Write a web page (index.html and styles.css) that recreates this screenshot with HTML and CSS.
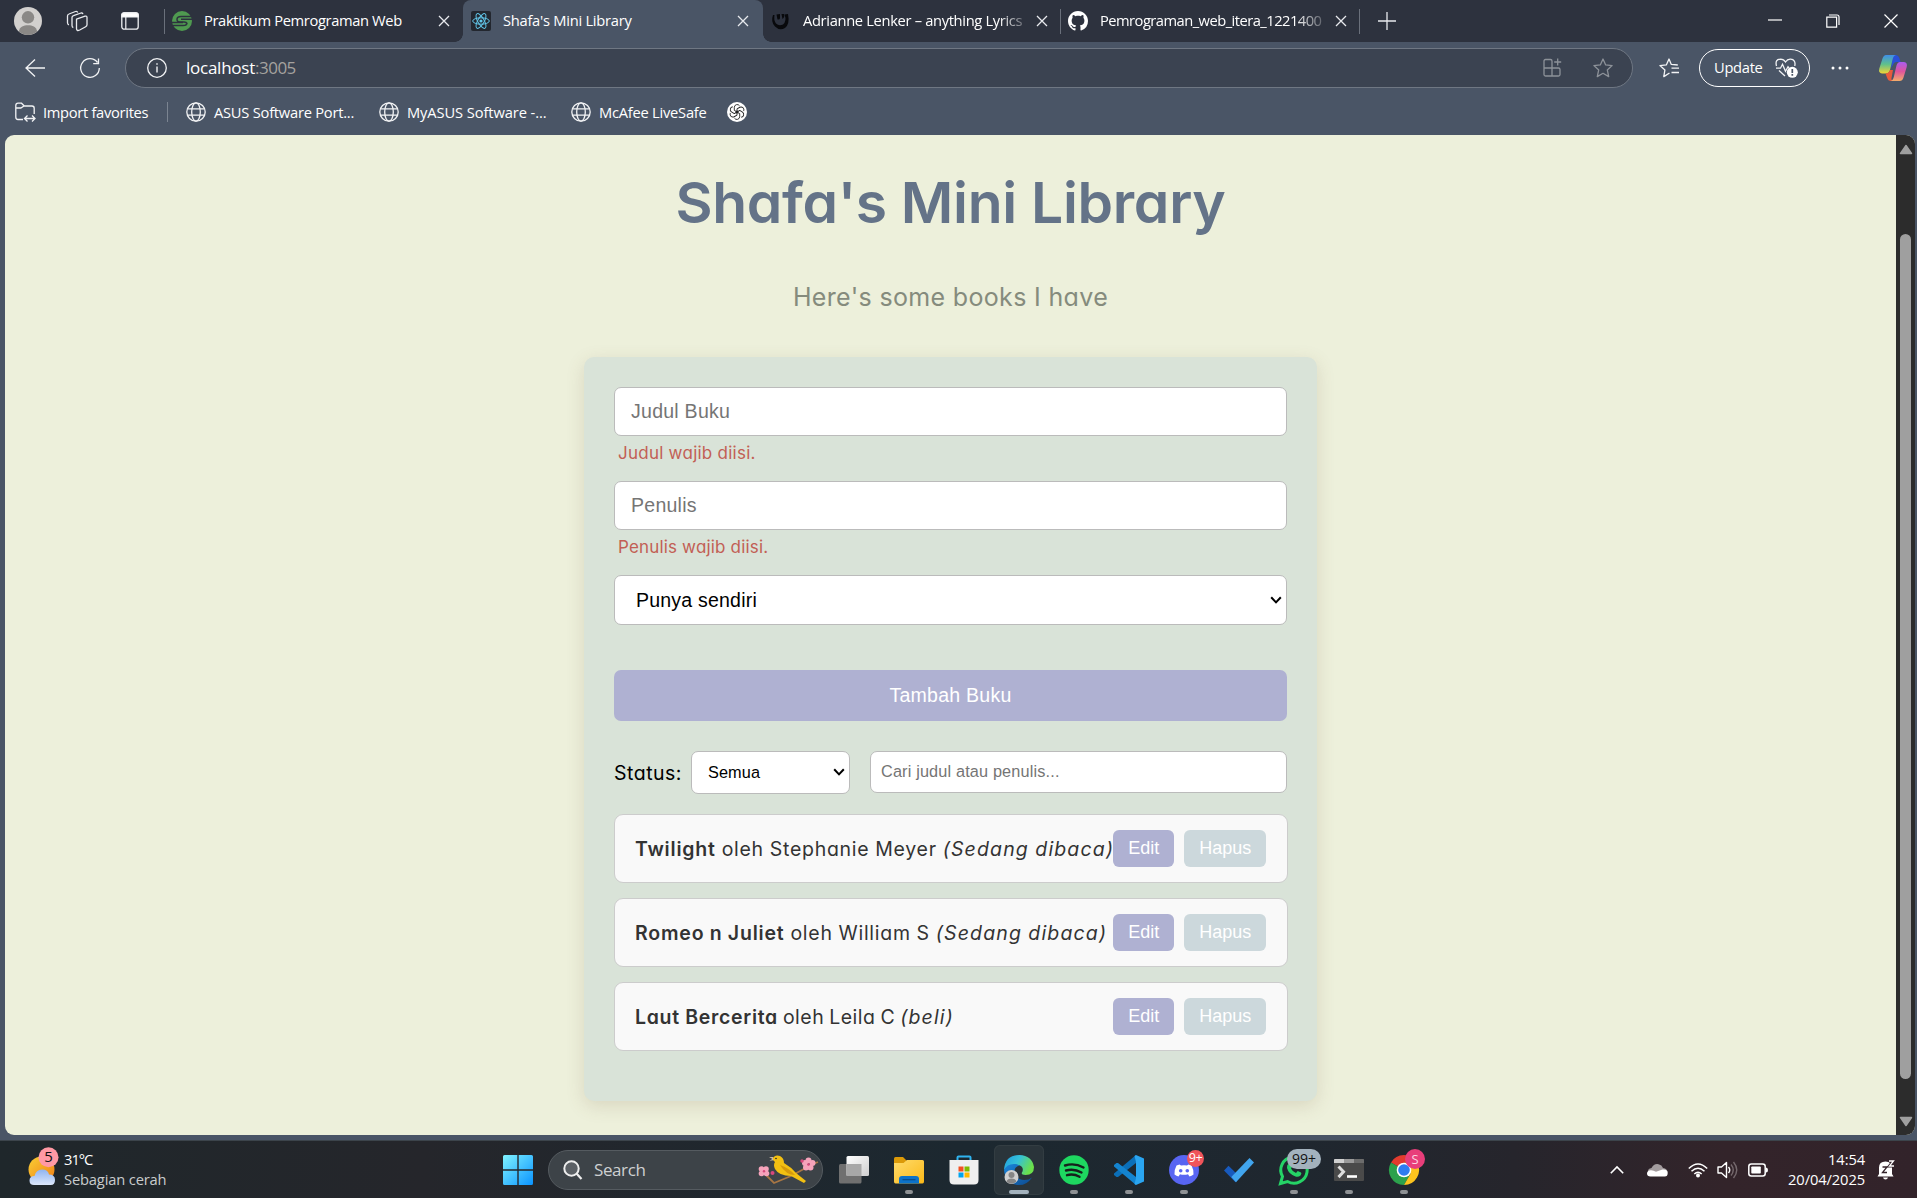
FILE: index.html
```html
<!DOCTYPE html>
<html lang="id">
<head>
<meta charset="utf-8">
<title>Shafa's Mini Library</title>
<link rel="stylesheet" href="styles.css">
</head>
<body>
<svg class="defs" aria-hidden="true">
  <defs>
    <symbol id="x" viewBox="0 0 12 12"><path d="M1 1l10 10M11 1L1 11" fill="none" stroke="#e8eaee" stroke-width="1.3"/></symbol>
    <symbol id="globe" viewBox="0 0 20 20"><g fill="none" stroke="#f2f3f5" stroke-width="1.3"><circle cx="10" cy="10" r="9.2"/><ellipse cx="10" cy="10" rx="4.3" ry="9.2"/><path d="M1.6 6.8h16.8M1.6 13.2h16.8"/></g></symbol>
    <linearGradient id="gWin" x1="0" y1="0" x2="1" y2="1"><stop offset="0" stop-color="#80f3ff"/><stop offset="1" stop-color="#0a93ff"/></linearGradient>
    <linearGradient id="gSun" x1="0" y1="0" x2="1" y2="1"><stop offset="0" stop-color="#f9cf35"/><stop offset="1" stop-color="#f07d14"/></linearGradient>
    <linearGradient id="gCloud" x1="0" y1="0" x2="0" y2="1"><stop offset="0" stop-color="#8fb4f0"/><stop offset="1" stop-color="#dce7fb"/></linearGradient>
    <linearGradient id="gFold" x1="0" y1="0" x2="1" y2="1"><stop offset="0" stop-color="#ffdb6b"/><stop offset="1" stop-color="#fbb918"/></linearGradient>
    <linearGradient id="gEdge" x1="0" y1="0" x2="1" y2=".4"><stop offset="0" stop-color="#1f9be0"/><stop offset=".5" stop-color="#35c1d8"/><stop offset="1" stop-color="#6be04b"/></linearGradient>
    <linearGradient id="gEdge2" x1="0" y1="0" x2="1" y2="1"><stop offset="0" stop-color="#1a86dc"/><stop offset="1" stop-color="#0d4a8f"/></linearGradient>
    <linearGradient id="gCo1" x1="0" y1="0" x2="0" y2="1"><stop offset="0" stop-color="#3f8ee8"/><stop offset=".5" stop-color="#5fc08c"/><stop offset="1" stop-color="#f0d435"/></linearGradient>
    <linearGradient id="gCo2" x1="0" y1="0" x2="0" y2="1"><stop offset="0" stop-color="#a95cf0"/><stop offset=".5" stop-color="#e0559c"/><stop offset="1" stop-color="#f4ad6a"/></linearGradient>
    <linearGradient id="gTv" x1="0" y1="0" x2="1" y2="1"><stop offset="0" stop-color="#ffffff"/><stop offset="1" stop-color="#cfcfcf"/></linearGradient>
  </defs>
</svg>

<header class="tabstrip">
  <div class="strip-tools">
    <svg class="avatar" viewBox="0 0 28 28"><circle cx="14" cy="14" r="14" fill="#d2d0ce"/><circle cx="14" cy="10.3" r="6.2" fill="#8a8886"/><path d="M4.8 24.500C6 19.500 9.500 18.300 14 18.300s8 1.200 9.200 6.200A14 14 0 0 1 4.800 24.500z" fill="#8a8886"/></svg>
    <svg class="workspaces" viewBox="0 0 22 22"><g fill="none" stroke="#e8eaee" stroke-width="1.3" stroke-linejoin="round"><path d="M10.500 9.200l8.500-3q2-.5 2 1.300v7.200q0 1.500-1.300 2l-6 3.300q-3.200 1.500-3.200-1.500z"/><path d="M7.300 17.500q-1.300-.3-1.300-2V7.500q0-1.300 1.500-1.800L15 3q1.600-.4 1.800 1.200M3 14.800q-1.500-.3-1.500-2V6q0-1.500 1.500-2l6.500-2.500q1.700-.5 2.300 1"/></g></svg>
    <svg class="vtabs" viewBox="0 0 18 18"><rect x=".8" y=".8" width="16.400" height="16.400" rx="2.500" fill="none" stroke="#f0f1f3" stroke-width="1.300"/><path d="M.8 5V3Q.8.800 3 .8h12Q17.200.8 17.200 3v2zM4.800 5v12" fill="#fff" stroke="#f0f1f3" stroke-width="1.200"/></svg>
  </div>
  <div class="tab sep">
    <svg class="fav" viewBox="0 0 20 20"><circle cx="10" cy="10" r="10" fill="#4f9a50"/><g fill="none" stroke="#2d323e" stroke-width="1.500"><path d="M20 5.500H9Q5 5.500 5 8.300T8 11h4q2.500 0 2.500 1.500"/><path d="M20 8.300H9M0 14.500h11Q15 14.500 15 11.700M0 11.500h11"/></g></svg>
    <span class="ttl t1">Praktikum Pemrograman Web</span><svg class="cl"><use href="#x"/></svg>
  </div>
  <div class="tab active">
    <svg class="fav" viewBox="0 0 20 20"><rect width="20" height="20" rx="2" fill="#23272f"/><g fill="none" stroke="#61c5e8" stroke-width="1"><ellipse cx="10" cy="10" rx="8.300" ry="3.200"/><ellipse cx="10" cy="10" rx="8.300" ry="3.200" transform="rotate(60 10 10)"/><ellipse cx="10" cy="10" rx="8.300" ry="3.200" transform="rotate(120 10 10)"/></g><circle cx="10" cy="10" r="1.600" fill="#61c5e8"/></svg>
    <span class="ttl t2">Shafa's Mini Library</span><svg class="cl"><use href="#x"/></svg>
  </div>
  <div class="tab">
    <svg class="fav" viewBox="0 0 20 20"><path d="M2 4Q-.5 11 4 15.500T14 17Q19 13 17 3l-3.500.5Q16 10 12 13.500q-4 2-7-1Q2.500 9 3.500 4z" fill="#08090c"/><path d="M5.500 3.500l1 5Q9 9 9 7V3zM10.500 3l2.500 0q1 3-1.500 5z" fill="#08090c"/></svg>
    <span class="ttl t3 fade">Adrianne Lenker – anything Lyrics</span><svg class="cl"><use href="#x"/></svg>
  </div>
  <div class="tab sep last">
    <svg class="fav" viewBox="0 0 16 16"><path fill="#fff" d="M8 0C3.580 0 0 3.580 0 8c0 3.540 2.290 6.530 5.470 7.590.4.070.55-.17.55-.38 0-.19-.01-.82-.01-1.490-2.010.37-2.530-.49-2.690-.94-.09-.23-.48-.94-.82-1.130-.28-.15-.68-.52-.01-.53.63-.01 1.080.58 1.230.82.72 1.210 1.870.87 2.330.66.07-.52.28-.87.51-1.070-1.780-.2-3.640-.89-3.640-3.950 0-.87.31-1.590.82-2.150-.08-.2-.36-1.020.08-2.120 0 0 .67-.21 2.200.82.640-.18 1.320-.27 2-.27s1.360.09 2 .27c1.530-1.040 2.200-.82 2.200-.82.440 1.100.160 1.920.080 2.120.51.56.82 1.270.82 2.150 0 3.070-1.870 3.750-3.650 3.950.29.25.54.73.54 1.480 0 1.070-.01 1.930-.01 2.200 0 .21.15.46.55.38A8.010 8.010 0 0 0 16 8c0-4.420-3.580-8-8-8z"/></svg>
    <span class="ttl t4 fade">Pemrograman_web_itera_1221400</span><svg class="cl"><use href="#x"/></svg>
  </div>
  <svg class="plus" viewBox="0 0 18 18"><path d="M9 0v18M0 9h18" stroke="#e8eaee" stroke-width="1.300"/></svg>
  <div class="winctl">
    <svg viewBox="0 0 14 14"><path d="M0 6h14" stroke="#fff" stroke-width="1.200"/></svg>
    <svg viewBox="0 0 14 14"><path d="M.8 3.200h9.800v10H.8zM3 1h8Q13 1 13 3v8" fill="none" stroke="#fff" stroke-width="1.200"/></svg>
    <svg viewBox="0 0 14 14"><path d="M.5.500l13 13M13.500.500l-13 13" stroke="#fff" stroke-width="1.200"/></svg>
  </div>
</header>

<div class="toolbar">
  <svg class="back" viewBox="0 0 20 20"><path d="M20 10H1M10 1.500L1 10l9 8.500" fill="none" stroke="#f2f3f5" stroke-width="1.300"/></svg>
  <svg class="reload" viewBox="0 0 20 20"><path d="M17.500 4.500A9.300 9.300 0 1 0 19.300 10M18.500.5v5.200h-5.300" fill="none" stroke="#f2f3f5" stroke-width="1.300"/></svg>
  <div class="address">
    <svg class="info" viewBox="0 0 20 20"><circle cx="10" cy="10" r="9.300" fill="none" stroke="#f2f3f5" stroke-width="1.300"/><path d="M10 8.500v6M10 5.200v1.600" stroke="#f2f3f5" stroke-width="1.400"/></svg>
    <span class="url"><span class="host">localhost</span><span class="port">:3005</span></span>
    <svg class="apps" viewBox="0 0 20 20"><path d="M1 10V3q0-1.500 1.500-1.500h5Q9 1.500 9 3v7H1v6.500Q1 18 2.500 18h13q1.500 0 1.500-1.500V11.500Q17 10 15.500 10H9v8M14.700.500v7M11.200 4h7" fill="none" stroke="#8d9299" stroke-width="1.300"/></svg>
    <svg class="star" viewBox="0 0 20 20"><path d="M10 1l2.700 5.900 6.400.7-4.800 4.300 1.400 6.700L10 15.300l-5.700 3.300 1.400-6.700L.9 7.600l6.400-.7z" fill="none" stroke="#8d9299" stroke-width="1.300" stroke-linejoin="round"/></svg>
  </div>
  <svg class="favs" viewBox="0 0 20 20"><path d="M10.500 15L4.800 18.600l1.100-6.700L.9 7.600l6.400-.7L10 1l2.300 5.400 6.500.600M12.500 10.200h7.500M12.500 14.500h7.500" fill="none" stroke="#f2f3f5" stroke-width="1.300" stroke-linejoin="round"/></svg>
  <div class="update"><span>Update</span>
    <svg viewBox="0 0 23 20"><path d="M1.500 8Q-.3 1.200 5.500 1.200 8.800 1.300 10.500 4q2-3 5-2.800 5.500.3 4.300 6.800M1 10.200h4.500l2-4 3 7 2.500-4.500 1 1.500M4 12.500l6 5.500" fill="none" stroke="#f2f3f5" stroke-width="1.300"/><circle cx="17.300" cy="14.300" r="5.500" fill="#fff"/><path d="M17.300 11v4M17.300 16v1.700" stroke="#4a5566" stroke-width="1.700"/></svg>
  </div>
  <svg class="dots" viewBox="0 0 18 4"><g fill="#fff"><circle cx="2" cy="2" r="1.500"/><circle cx="9" cy="2" r="1.500"/><circle cx="16" cy="2" r="1.500"/></g></svg>
  <svg class="copilot" viewBox="0 0 28 26"><path d="M14 0h2.500q3 0 4 3.500l1 3.500h-4Q15 7 14 10l-2 3z" fill="#2a50d8"/><path d="M7 0h10q-2.500.5-3.300 4L11 15q-1.200 3.500-4 3.500H3Q-.8 18 .3 13.500L3.500 3.500Q4.700 0 7 0z" fill="url(#gCo1)"/><path d="M6.500 18.500q3.500-.3 4.500-3.500l3 0-1.500 8q-.5 2.500 2 3H12q-3 0-4-3.500z" fill="#e85a3c"/><path d="M21 7h4q3.800.5 2.700 5l-3.200 10.500Q23.500 26 20.500 26h-9q2.500-.5 3.300-4L17.500 10.500Q18.500 7.200 21 7z" fill="url(#gCo2)"/></svg>
</div>

<div class="bookmarks">
  <svg class="imp" viewBox="0 0 20 20"><path d="M8 17.500H3Q.8 17.500.8 15V3.500Q.8 1.200 3 1.200h3.500L9.300 4H17q2.200 0 2.200 2.200V12M.8 6h5L9 4M10 16.500h9.500M12.500 13.500l-3 3 3 3M17 13.500l3 3-3 3" fill="none" stroke="#f2f3f5" stroke-width="1.300"/></svg>
  <span class="b1">Import favorites</span><i class="bsep"></i>
  <svg><use href="#globe"/></svg><span class="b2">ASUS Software Port...</span>
  <svg><use href="#globe"/></svg><span class="b3">MyASUS Software -...</span>
  <svg><use href="#globe"/></svg><span class="b4">McAfee LiveSafe</span>
  <svg viewBox="0 0 20 20"><circle cx="10" cy="10" r="10" fill="#fff"/><g fill="none" stroke="#222" stroke-width=".9"><path id="petal" d="M7.300 8.400V5.200a2.900 2.900 0 0 1 5.200-1.500M7.300 8.400l4.200 2.500"/><use href="#petal" transform="rotate(60 10 10)"/><use href="#petal" transform="rotate(120 10 10)"/><use href="#petal" transform="rotate(180 10 10)"/><use href="#petal" transform="rotate(240 10 10)"/><use href="#petal" transform="rotate(300 10 10)"/></g></svg>
</div>

<div class="viewport">
  <main class="page">
    <h1>Shafa's Mini Library</h1>
    <p class="sub">Here's some books I have</p>
    <section class="card">
      <input class="field" placeholder="Judul Buku">
      <p class="err e1">Judul wajib diisi.</p>
      <input class="field" placeholder="Penulis">
      <p class="err e2">Penulis wajib diisi.</p>
      <div class="select big"><span>Punya sendiri</span><svg viewBox="0 0 12 12"><path d="M1.200 3.200L6 8.400l4.800-5.200" fill="none" stroke="#000" stroke-width="2"/></svg></div>
      <button class="add">Tambah Buku</button>
      <div class="filter">
        <label>Status:</label>
        <div class="select small"><span>Semua</span><svg viewBox="0 0 12 12"><path d="M1.200 3.200L6 8.400l4.800-5.200" fill="none" stroke="#000" stroke-width="2"/></svg></div>
        <input class="search" placeholder="Cari judul atau penulis...">
      </div>
      <ul>
        <li><p><strong>Twilight</strong> <span>oleh Stephanie Meyer</span> <em>(Sedang dibaca)</em></p><button class="edit">Edit</button><button class="del">Hapus</button></li>
        <li><p><strong>Romeo n Juliet</strong> <span>oleh William S</span> <em>(Sedang dibaca)</em></p><button class="edit">Edit</button><button class="del">Hapus</button></li>
        <li class="short"><p><strong>Laut Bercerita</strong> <span>oleh Leila C</span> <em>(beli)</em></p><button class="edit">Edit</button><button class="del">Hapus</button></li>
      </ul>
    </section>
  </main>
  <div class="scroll">
    <svg viewBox="0 0 14 11"><path d="M7 1.500L12.500 9.500h-11z" fill="#9f9f9f" stroke="#9f9f9f" stroke-width="1.500" stroke-linejoin="round"/></svg>
    <div class="thumb"></div>
    <svg viewBox="0 0 14 11"><path d="M7 9.500L12.500 1.500h-11z" fill="#9f9f9f" stroke="#9f9f9f" stroke-width="1.500" stroke-linejoin="round"/></svg>
  </div>
</div>

<footer class="taskbar">
  <div class="weather">
    <svg viewBox="0 0 32 38"><circle cx="13.500" cy="22.500" r="13" fill="url(#gSun)"/><path d="M6 38Q1.500 38 1.500 33.500T6.500 29Q8 22.500 14 22.500T21 27.500Q27 27.500 27 33T22 38z" fill="url(#gCloud)"/><circle cx="20.500" cy="10.200" r="10" fill="#ff99a4"/><text x="20.500" y="15.300" text-anchor="middle" class="wnum">5</text></svg>
    <div><b>31°C</b><span>Sebagian cerah</span></div>
  </div>
  <div class="dock">
    <svg class="start" viewBox="0 0 30 30"><path d="M1.500 0H14.300v14.300H0V1.500Q0 0 1.500 0zM15.700 0h12.800Q30 0 30 1.500v12.800H15.700zM0 15.700h14.300V30H1.500Q0 30 0 28.500zM15.700 15.700H30v12.800Q30 30 28.500 30H15.700z" fill="url(#gWin)"/></svg>
    <div class="find">
      <svg class="mag" viewBox="0 0 20 20"><circle cx="8.500" cy="8.500" r="7.200" fill="#5b6065" stroke="#eee" stroke-width="2"/><path d="M13.500 13.500l5 5.500" stroke="#eee" stroke-width="2.200"/></svg>
      <span>Search</span>
      <svg class="bird" viewBox="0 0 60 32"><path d="M7 20l9 9 17-7 22-12 5-2" fill="none" stroke="#a87644" stroke-width="1.800"/><path d="M14 5q3-5 8-3 4 2 4 7 7 4 12 10l10 8-2 2-13-7q-12 0-16-7-2-4 0-7z" fill="#f3c012"/><path d="M22 11q9 3 15 10-9 0-15-10z" fill="#d69a0c"/><path d="M15 3l-4 0 4 2.200zM15 4.500l-3.500 2.200 4-.500z" fill="#c9b7a8"/><circle cx="18" cy="4.500" r=".8" fill="#222"/><g fill="#f6a3bb"><circle cx="3.500" cy="15" r="2.800"/><circle cx="8" cy="15" r="2.800"/><circle cx="3.500" cy="19.500" r="2.800"/><circle cx="8.500" cy="19.500" r="2.800"/><circle cx="47" cy="9" r="3"/><circle cx="50.500" cy="6.500" r="3"/><circle cx="54.500" cy="9" r="3"/><circle cx="52.500" cy="13.500" r="3"/><circle cx="48" cy="13.500" r="3"/></g><g fill="#d8487c"><circle cx="6" cy="17.300" r="1.200"/><circle cx="50.500" cy="10.500" r="1.300"/><circle cx="14.500" cy="19" r="2"/><circle cx="44" cy="7" r="1.700"/></g></svg>
    </div>
    <div class="app"><svg viewBox="0 0 30 30"><rect x="0" y="9" width="22.500" height="19.500" rx="1.500" fill="#707070"/><rect x="7.500" y="1" width="22.500" height="20" rx="1.500" fill="url(#gTv)"/><rect x="7.500" y="9" width="15" height="12" fill="#a8a8a8"/></svg></div>
    <div class="app on"><svg viewBox="0 0 30 30"><path d="M0 6V3.500Q0 2 1.500 2H9l3.500 3.500V8H0z" fill="#dc9a08"/><path d="M0 8q5 0 9.500 0L13 5h15.500Q30 5 30 6.500v20Q30 28.500 28.500 28.500h-27Q0 28.500 0 26.500z" fill="url(#gFold)"/><path d="M5 28.500V24q0-3 3-3h14q3 0 3 3v4.500z" fill="#0c72c9"/><path d="M8.500 24.700h13" stroke="#084a88" stroke-width="1.200"/></svg></div>
    <div class="app"><svg viewBox="0 0 30 30"><path d="M8.500 6V2.500q0-1 1-1h11q1 0 1 1V6" fill="none" stroke="#2fb4f0" stroke-width="2"/><path d="M.5 5h29v20q0 4.500-4.500 4.500H5Q.5 29.500.5 25z" fill="#efefef"/><path d="M9.500 11.500h5v5h-5z" fill="#f25022"/><path d="M15.500 11.500h5v5h-5z" fill="#7fba00"/><path d="M9.500 17.500h5v5h-5z" fill="#00a4ef"/><path d="M15.500 17.500h5v5h-5z" fill="#ffb900"/></svg></div>
    <div class="app on cur"><svg viewBox="0 0 30 30"><path d="M0 15Q1 0 15.500 0 28 .5 30 12q0 8-8.500 8-5.500 0-3-3.500 1.500-5-4-6.500-4-1-8.500 1Q1.500 12.500 0 15z" fill="url(#gEdge)"/><path d="M0 15Q3 8.500 11 9q3 .3 4.500 1.500Q9 12.500 11 19q2.500 6 9.500 6 4.500 0 7.500-2.500Q22.500 31 13 30 1 27.500 0 15z" fill="url(#gEdge2)"/><circle cx="7.500" cy="22" r="7" fill="#cfcfcf"/><circle cx="7.500" cy="20" r="3" fill="#858585"/><path d="M2.500 26.500q1-3 5-3t5 3q-5 4.500-10 0z" fill="#858585"/></svg></div>
    <div class="app on"><svg viewBox="0 0 30 30"><circle cx="15" cy="15" r="14.700" fill="#1ed760"/><path d="M6 10.500q9.500-3 18.500 2M7 15.500q8-2.300 15.500 2M8 20.200q6.500-1.800 12.500 1.600" fill="none" stroke="#16201c" stroke-width="2.400" stroke-linecap="round"/></svg></div>
    <div class="app on"><svg viewBox="0 0 30 30"><path d="M22 0v8L4 22l-1.500 0L0 20v-1.500z" fill="#0b6fb8"/><path d="M0 11.500V10l2.500-2H4l18 14v8z" fill="#1484d0"/><path d="M22 0l8 3.500v23L22 30l-1.500-1 1.500-6V7l-1.500-6z" fill="#2aa5f0"/></svg></div>
    <div class="app on"><svg viewBox="0 0 30 30"><circle cx="15" cy="15" r="15" fill="#5865f2"/><path d="M10.500 9.500l1.500 1q3-.6 6 0l1.500-1 3 1q2.500 4.500 2 9-2 1.700-4 2l-1.500-2.200q-4 1-8 0L9.500 21.500q-2-.3-4-2-.5-4.500 2-9z" fill="#fff"/><circle cx="11.700" cy="15.700" r="1.800" fill="#5865f2"/><circle cx="18.300" cy="15.700" r="1.800" fill="#5865f2"/></svg><span class="badge red">9+</span></div>
    <div class="app"><svg viewBox="0 0 30 30"><path d="M0 15.500l4.500-4.800L16 22l-4.500 5.300z" fill="#185abd"/><path d="M25.500 3L30 7.500 12 27.300 7.300 22z" fill="#41a5ee"/></svg></div>
    <div class="app on"><svg viewBox="0 0 30 30"><path d="M1.500 28.500l2-7A13.200 13.200 0 1 1 8.500 26.500z" fill="none" stroke="#25d366" stroke-width="3"/><path d="M9.500 8.500q1.500-1.500 2.500 0l1.300 3-1.300 2q1.500 3.300 5 4.500l1.700-1.900 3.300 1.500q1 1-.5 3-2 1.800-5 1Q9.500 19 8 13q-.3-3 1.500-4.500z" fill="#25d366"/></svg><span class="badge gray">99+</span></div>
    <div class="app on"><svg viewBox="0 0 30 30"><rect x="0" y="4" width="30" height="22" rx="1" fill="#4a4a4a"/><path d="M0 8V5q0-1 1-1h9v4z" fill="#d0d0d0"/><path d="M10 4h10v4H10z" fill="#9a9a9a"/><path d="M20 4h9q1 0 1 1v3H20z" fill="#6c6c6c"/><path d="M4.500 11.500l5 5.300-5 5.300" fill="none" stroke="#ddd" stroke-width="3"/><path d="M13 21.500h10" stroke="#fff" stroke-width="2.600"/></svg></div>
    <div class="app on"><svg viewBox="0 0 30 30"><path d="M15 15L2 7.500A15 15 0 0 1 28 7.500H15z" fill="#e33b2e"/><path d="M15 15L2 7.500A15 15 0 0 0 15 30l6.500-11.200z" fill="#2ca14c"/><path d="M15 7.500h13A15 15 0 0 1 15 30l6.500-11.200z" fill="#fcc31e"/><circle cx="15" cy="15" r="7.300" fill="#fff"/><circle cx="15" cy="15" r="5.800" fill="#2f7cf0"/></svg><span class="badge pink">S</span></div>
  </div>
  <div class="tray">
    <svg class="chev" viewBox="0 0 14 8"><path d="M.8 7.200L7 1l6.200 6.200" fill="none" stroke="#fff" stroke-width="1.600"/></svg>
    <svg class="cloud" viewBox="0 0 21 14"><path d="M2 11Q-1 6 4.500 5 7 .3 11.500 1.200 15 2 16 5q4.500.5 4.500 4.500z" fill="#a39c9e"/><path d="M3.500 13.500Q0 13.500 0 10.500T4 7.300q2.500 0 5 1.500L15.500 6.500Q20.700 6 20.700 10T17 13.500z" fill="#fff"/></svg>
    <svg class="wifi" viewBox="0 0 20 16"><g fill="none" stroke="#fff" stroke-width="1.500"><path d="M.8 6.500q9.200-9 18.400 0M3.500 9.300q6.500-6 13 0M6.300 12q3.700-3.300 7.400 0"/></g><circle cx="10" cy="13.500" r="2" fill="#fff"/></svg>
    <svg class="vol" viewBox="0 0 21 18"><path d="M1 6h3.500l5-4.500v15L4.500 12H1z" fill="none" stroke="#fff" stroke-width="1.400" stroke-linejoin="round"/><path d="M11.500 6q2.500 3 0 6" fill="none" stroke="#fff" stroke-width="1.400"/><path d="M14 3.500q4.500 5.500 0 11M16.500 1q6.500 8 0 16" fill="none" stroke="#75696d" stroke-width="1.400"/></svg>
    <svg class="bat" viewBox="0 0 20 14"><rect x=".8" y="1" width="16.400" height="12" rx="2.500" fill="none" stroke="#fff" stroke-width="1.500"/><rect x="3.300" y="3.400" width="9.500" height="7.200" rx=".8" fill="#fff"/><path d="M18 4.500q2 0 2 2.500t-2 2.500z" fill="#fff"/></svg>
    <div class="clock"><span>14:54</span><span>20/04/2025</span></div>
    <svg class="bell" viewBox="0 0 18 20"><path d="M2 14V7.500Q2 1.500 8.500 1.500T15 7.500V14l1.500 2.500H.5z" fill="#fff"/><path d="M6 17.500h5q-.5 2-2.500 2T6 17.500z" fill="#fff"/><path d="M5.500 7h4.500l-4.500 5.500h4.500" fill="none" stroke="#33232a" stroke-width="1.300"/><path d="M12 1h4.500L12.500 6h4.500" fill="none" stroke="#33232a" stroke-width="3"/><path d="M12 1h4.500L12.500 6h4.500" fill="none" stroke="#fff" stroke-width="1.300"/></svg>
  </div>
</footer>
</body>
</html>
```
FILE: styles.css
```css
* { box-sizing: border-box; margin: 0; padding: 0; }
html, body { height: 100%; overflow: hidden; }
body {
  display: flex; flex-direction: column;
  background: #4a5566; color: #fff;
  font: 14.7px/20px "Open Sans", "Noto Sans", sans-serif;
}
svg { display: block; flex: none; overflow: visible; }
.defs { position: absolute; width: 0; height: 0; }

/* tab strip */
.tabstrip { height: 42px; flex: none; display: flex; align-items: center; background: #2d323e; }
.strip-tools { width: 164px; display: flex; align-items: center; padding-left: 14px; }
.avatar { width: 28px; height: 28px; }
.workspaces { width: 22px; height: 22px; margin-left: 24px; }
.vtabs { width: 18px; height: 18px; margin-left: 33px; }
.tab { position: relative; width: 299px; height: 42px; display: flex; align-items: center; padding: 0 13px 0 8px; }
.tab.sep::before, .tab.last::after { content: ""; position: absolute; left: 0; top: 9px; width: 1px; height: 25px; background: #6a707b; }
.tab.last::after { left: auto; right: 0; }
.tab:nth-of-type(4) { width: 297px; padding-right: 12px; }
.tab.last { width: 300px; }
.tab.active { width: 300px; padding-right: 14px; background: #4a5566; border-radius: 8px 8px 0 0; }
.tab.active::before, .tab.active::after { content: ""; position: absolute; bottom: 0; width: 8px; height: 8px; }
.tab.active::before { left: -8px; background: radial-gradient(circle at 0 0, #2d323e 7.500px, #4a5566 8px); }
.tab.active::after { right: -8px; background: radial-gradient(circle at 100% 0, #2d323e 7.500px, #4a5566 8px); }
.fav { width: 20px; height: 20px; margin-right: 12px; }
.ttl { flex: none; width: 222px; padding-bottom: 2px; margin-right: auto; white-space: nowrap; letter-spacing: -.33px; }
.t1 { letter-spacing: -.36px; }
.t2 { letter-spacing: -.26px; }
.t4 { letter-spacing: -.52px; }
.fade { -webkit-mask: linear-gradient(90deg, #000 88%, rgba(0,0,0,.25)); mask: linear-gradient(90deg, #000 88%, rgba(0,0,0,.25)); }
.cl { width: 12px; height: 12px; }
.plus { width: 18px; height: 18px; margin-left: 18px; }
.winctl { margin-left: auto; margin-right: 19px; display: flex; gap: 44px; }
.winctl svg { width: 14px; height: 14px; }

/* toolbar */
.toolbar { height: 51px; flex: none; display: flex; align-items: center; padding: 0 10px 0 25px; }
.back { width: 20px; height: 20px; }
.reload { width: 20px; height: 20px; margin-left: 35px; }
.address { flex: none; width: 1508px; height: 40px; margin-left: 25px; padding: 0 19px 0 21px; display: flex; align-items: center; border: 1px solid #6f7783; border-radius: 20px; background: #3b4351; }
.info { width: 20px; height: 20px; }
.url { margin-left: 19px; font-size: 17px; margin-right: auto; }
.host { letter-spacing: -.25px; }
.port { color: #a5a29f; letter-spacing: -.5px; }
.apps { width: 20px; height: 20px; }
.star { width: 20px; height: 20px; margin-left: 30px; }
.favs { width: 20px; height: 20px; margin-left: 26px; }
.update { width: 111px; height: 38px; margin-left: 20px; padding: 0 11px 0 14px; display: flex; align-items: center; justify-content: space-between; border: 1.500px solid #fff; border-radius: 19px; letter-spacing: -.3px; }
.update span { padding-bottom: 1px; }
.update svg { width: 23px; height: 20px; }
.dots { width: 18px; height: 4px; margin-left: 21px; }
.copilot { width: 28px; height: 26px; margin-left: 30px; }

/* bookmarks */
.bookmarks { height: 42px; flex: none; display: flex; align-items: center; padding: 0 0 4px 15px; white-space: nowrap; }
.bookmarks svg { width: 20px; height: 20px; }
.bookmarks span { margin-left: 8px; letter-spacing: -.24px; }
.bookmarks .b1 { width: 131px; letter-spacing: -.3px; }
.b2 { width: 165px; }
.bookmarks .b3 { width: 164px; letter-spacing: -.1px; }
.b4 { width: 128px; }
.bsep { width: 1px; height: 20px; margin-right: 18px; margin-left: -7px; background: #7b8491; }

/* page viewport */
.viewport { height: 1000px; flex: none; margin: 0 2px 5px 5px; display: flex; border-radius: 9px; overflow: hidden; background: #edf0db; }
.page { flex: 1; display: flex; flex-direction: column; align-items: center; color: #333; font-family: Inter, "DejaVu Sans", sans-serif; font-feature-settings: "cv11"; }
h1 { margin-top: 33px; font-size: 57px; line-height: 70px; font-weight: 600; letter-spacing: -.3px; color: #647388; }
.sub { margin-top: 42px; font-size: 25px; line-height: 34px; letter-spacing: .34px; color: #858b7d; }
.card { width: 733px; height: 744px; margin-top: 43px; padding: 30px; border-radius: 10px; background: #d9e3d8; box-shadow: 0 5px 18px rgba(120,90,60,.17); }
.card input, .card button, .select { font-family: "Liberation Sans", Arial, sans-serif; font-feature-settings: normal; }
.field { display: block; width: 673px; height: 49px; padding: 0 16px; border: 1px solid #bbb; border-radius: 7px; background: #fff; font-size: 19.550px; letter-spacing: .25px; }
input::placeholder { color: #757575; opacity: 1; }
.err { height: 45px; padding: 6px 0 0 4px; font-size: 17px; line-height: 22px; color: #c25f55; }
.e1 { letter-spacing: .25px; }
.e2 { letter-spacing: .17px; }
.select { display: flex; align-items: center; justify-content: space-between; border: 1px solid #bbb; border-radius: 7px; background: #fff; color: #000; }
.select svg { width: 12px; height: 12px; }
.big { height: 50px; padding: 0 4px 0 21px; font-size: 19.550px; letter-spacing: .2px; }
.add { display: block; width: 673px; height: 51px; margin-top: 45px; border: 0; border-radius: 7px; background: #afb1d2; color: #fff; font-size: 19.550px; letter-spacing: .25px; }
.filter { margin-top: 30px; display: flex; align-items: flex-start; }
label { width: 77px; color: #000; font-size: 19.500px; line-height: 44px; letter-spacing: .5px; }
.small { width: 159px; height: 43px; padding: 0 4px 2px 16px; font-size: 16.300px; letter-spacing: .1px; }
.search { flex: 1; height: 42px; margin-left: 20px; padding: 0 11px 2px 10px; border: 1px solid #bbb; border-radius: 7px; background: #fff; font-size: 16.300px; letter-spacing: .15px; }
ul { margin-top: 19px; display: grid; gap: 15px; list-style: none; }
li { height: 69px; padding: 0 20px; display: flex; align-items: center; border: 1px solid #ccc; border-radius: 9px; background: #f9f9f9; }
li p { flex: 1; white-space: nowrap; font-size: 19.500px; line-height: 28px; letter-spacing: .72px; word-spacing: -.3px; }
li strong { font-weight: 600; letter-spacing: .8px; }
li em { letter-spacing: 1.150px; }
.short p { letter-spacing: .5px; word-spacing: -1px; }
.short strong { letter-spacing: .68px; word-spacing: 0; }
li button { height: 37px; border: 0; border-radius: 6px; color: #fff; font-size: 18px; }
.edit { width: 61px; margin-right: 10px; margin-left: -1px; background: #afb1d2; }
.del { width: 82px; margin-right: 1px; background: #ccd8dc; }
.scroll { width: 19px; display: flex; flex-direction: column; align-items: center; background: #2c2c2c; padding: 9px 0 8px; }
.scroll svg { width: 14px; height: 11px; }
.thumb { width: 11px; height: 845px; margin: 79px 0 auto; border-radius: 6px; background: #9f9f9f; }

/* taskbar */
.taskbar { flex: 1; display: flex; align-items: center; border-top: 1px solid #3c444b; background: linear-gradient(90deg, #1f272b 0, #25262b 22%, #1c2830 50%, #1f272f 68%, #26252c 79%, #33242a 90%, #32232a 100%); }
.weather { width: 503px; padding-left: 28px; display: flex; align-items: center; }
.weather svg { width: 32px; height: 38px; margin-top: -8px; }
.wnum { font: 15px "Open Sans", sans-serif; fill: #111; }
.weather div { margin: -2px 0 0 4px; display: flex; flex-direction: column; }
.weather b { font-weight: 400; letter-spacing: -1px; }
.weather span { color: #c9cccd; letter-spacing: -.15px; }
.dock { display: flex; align-items: center; }
.start { width: 30px; height: 30px; }
.find { width: 275px; height: 40px; margin: 0 5px 0 15px; padding: 0 4px 0 14px; display: flex; align-items: center; border: 1px solid #555b60; border-radius: 20px; background: #3d4348; color: #ced0d1; font-size: 17px; letter-spacing: -.4px; }
.mag { width: 20px; height: 20px; }
.find span { margin: 0 auto 0 11px; }
.bird { width: 60px; height: 32px; }
.app { position: relative; width: 50px; height: 50px; margin-right: 5px; display: flex; align-items: center; justify-content: center; border-radius: 6px; }
.app svg { width: 30px; height: 30px; }
.app:nth-child(n+3) { left: 1px; }
.cur { background: #2a343a; box-shadow: inset 0 0 0 1px #333d42; }
.on::after { content: ""; position: absolute; bottom: 1px; left: 21px; width: 8px; height: 4px; border-radius: 2px; background: #8e9194; }
.cur::after { left: 15px; width: 20px; background: #a3b2bd; }
.badge { position: absolute; display: flex; align-items: center; justify-content: center; }
.red { left: 28px; top: 5px; width: 17px; height: 17px; border-radius: 9px; background: #f0545a; font-size: 12.500px; letter-spacing: -.5px; }
.gray { left: 18px; top: 4px; width: 34px; height: 20px; border-radius: 10px; background: #a3b2bd; color: #111; font-size: 14px; }
.pink { left: 26px; top: 4px; width: 20px; height: 20px; border-radius: 10px; background: #e83e7a; color: #fbd5e2; font-size: 13px; }
.tray { margin-left: auto; padding-right: 22px; display: flex; align-items: center; }
.chev { width: 14px; height: 8px; }
.cloud { width: 21px; height: 14px; margin-left: 23px; }
.wifi { width: 20px; height: 16px; margin-left: 20px; }
.vol { width: 21px; height: 18px; margin-left: 9px; }
.bat { width: 20px; height: 14px; margin-left: 10px; }
.clock { width: 97px; margin: -2px 1px 0 0; display: flex; flex-direction: column; align-items: flex-end; letter-spacing: -.1px; }
.bell { width: 18px; height: 20px; margin-left: 11px; }
```
